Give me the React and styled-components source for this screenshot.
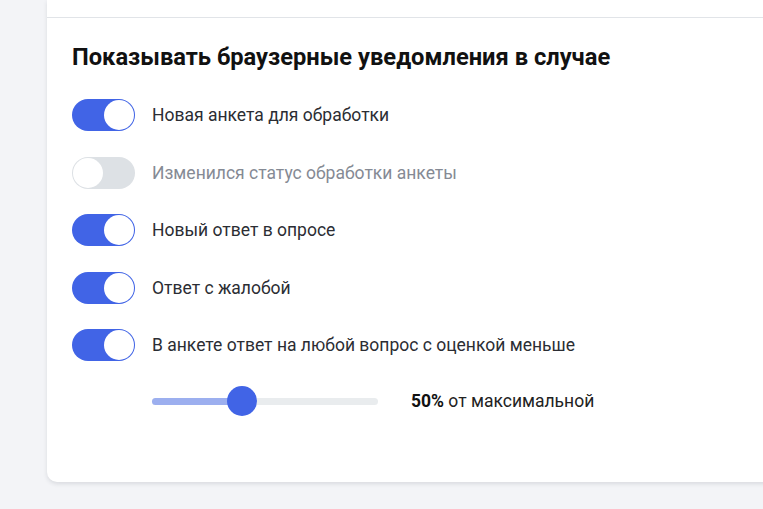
import React, { useState } from "react";
import styled, { createGlobalStyle } from "styled-components";

const GlobalStyle = createGlobalStyle`
  html, body {
    margin: 0;
    padding: 0;
    background: #f3f4f7;
    overflow: hidden;
  }
  body {
    font-family: Roboto, "Liberation Sans", sans-serif;
  }
`;

const Page = styled.div`
  width: 763px;
  height: 509px;
  padding-left: 47px;
  box-sizing: border-box;
  overflow: hidden;
`;

const Card = styled.div`
  width: 760px;
  background: #fff;
  border-radius: 0 0 10px 10px;
  box-shadow: 0 2px 4px rgba(30, 40, 60, 0.12);
`;

const PrevSection = styled.div`
  height: 17px;
  border-bottom: 1px solid #e1e4e8;
`;

const Section = styled.section`
  padding: 25px 0 65px 25px;
  display: flex;
  flex-direction: column;
`;

const Title = styled.h2`
  margin: 0 0 28px;
  font-size: 23.7px;
  line-height: 28px;
  font-weight: 700;
  color: #111;
`;

const List = styled.div`
  display: flex;
  flex-direction: column;
  gap: 25.5px;
`;

const Row = styled.label`
  display: flex;
  align-items: center;
  gap: 17px;
  height: 32px;
  cursor: pointer;
`;

const Track = styled.span`
  position: relative;
  flex: none;
  width: 63px;
  height: 32px;
  border-radius: 16px;
  background: ${(p) => (p.$on ? "#4164e6" : "#dde1e5")};
`;

const Knob = styled.span`
  position: absolute;
  top: 1px;
  left: ${(p) => (p.$on ? "32px" : "1px")};
  width: 30px;
  height: 30px;
  border-radius: 50%;
  background: #fff;
`;

const Label = styled.span`
  font-size: 17.5px;
  color: ${(p) => (p.$on ? "#2b2d33" : "#858a94")};
`;

const SliderRow = styled.div`
  display: flex;
  align-items: center;
  gap: 33px;
  height: 32px;
  margin: 24px 0 0 80px;
`;

const SliderTrack = styled.div`
  position: relative;
  width: 226px;
  height: 7px;
  border-radius: 4px;
  background: #e9ecee;
`;

const SliderFill = styled.div`
  height: 100%;
  border-radius: 4px;
  background: #9cafef;
`;

const Thumb = styled.div`
  position: absolute;
  top: 50%;
  width: 30px;
  height: 30px;
  margin: -15px 0 0 -15px;
  border-radius: 50%;
  background: #4164e6;
`;

const Value = styled.span`
  font-size: 17.5px;
  color: #222;
  b {
    font-weight: 700;
    color: #111;
  }
`;

const items = [
  { text: "Новая анкета для обработки", on: true },
  { text: "Изменился статус обработки анкеты", on: false },
  { text: "Новый ответ в опросе", on: true },
  { text: "Ответ с жалобой", on: true },
  { text: "В анкете ответ на любой вопрос с оценкой меньше", on: true },
];

const Switch = ({ on, text, onToggle }) => (
  <Row onClick={onToggle}>
    <Track $on={on}>
      <Knob $on={on} />
    </Track>
    <Label $on={on}>{text}</Label>
  </Row>
);

export default function App() {
  const [state, setState] = useState(items.map((i) => i.on));
  const percent = 50;
  const pos = (percent / 100) * 226 * 0.8;

  return (
    <Page>
      <GlobalStyle />
      <Card>
        <PrevSection />
        <Section>
          <Title>Показывать браузерные уведомления в случае</Title>
          <List>
            {items.map((item, i) => (
              <Switch
                key={item.text}
                text={item.text}
                on={state[i]}
                onToggle={() =>
                  setState((s) => s.map((v, j) => (j === i ? !v : v)))
                }
              />
            ))}
          </List>
          <SliderRow>
            <SliderTrack>
              <SliderFill style={{ width: pos }} />
              <Thumb style={{ left: pos }} />
            </SliderTrack>
            <Value>
              <b>{percent}%</b> от максимальной
            </Value>
          </SliderRow>
        </Section>
      </Card>
    </Page>
  );
}
